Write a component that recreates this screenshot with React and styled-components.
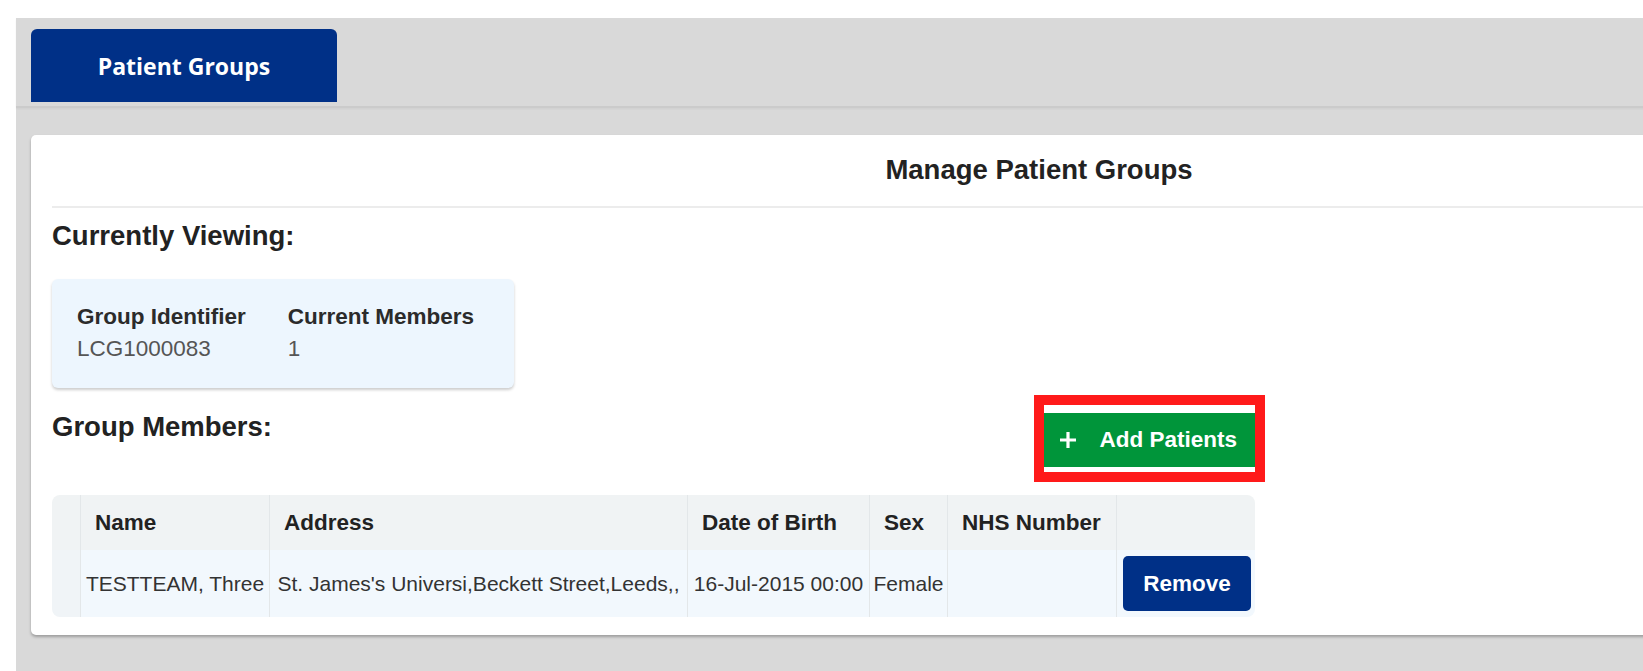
import React from "react";
import styled, { createGlobalStyle } from "styled-components";

const GlobalStyle = createGlobalStyle`
  html, body {
    margin: 0;
    padding: 0;
    background: #ffffff;
    overflow: hidden;
  }
  body {
    font-family: "Liberation Sans", Arial, sans-serif;
    color: #222;
  }
`;

const Page = styled.div`
  padding: 18px 0 0 16px;
  width: 2100px;
`;

const Shell = styled.div`
  background: #d9d9d9;
  min-height: calc(100vh - 18px);
`;

const TabBar = styled.nav`
  display: flex;
  padding: 11px 15px 4px;
  border-bottom: 2px solid #cbcbcb;
  box-shadow: 0 1px 2px rgba(0, 0, 0, 0.05);
`;

const Tab = styled.button`
  width: 306px;
  height: 73px;
  background: #003087;
  color: #ffffff;
  border: 0;
  border-radius: 6px 6px 0 0;
  font-family: "Open Sans", "Liberation Sans", sans-serif;
  font-weight: 700;
  font-size: 23px;
  cursor: pointer;
`;

const Content = styled.main`
  padding: 27px 15px 36px;
`;

const Card = styled.section`
  width: 2016px;
  box-sizing: border-box;
  background: #ffffff;
  border-radius: 5px;
  box-shadow: 0 2px 3px rgba(0, 0, 0, 0.28);
  padding: 18px 21px 18px;
`;

const Title = styled.h1`
  margin: 0;
  padding-bottom: 20px;
  border-bottom: 2px solid #ececec;
  text-align: center;
  font-size: 27.5px;
  line-height: 33px;
  font-weight: 700;
  color: #222;
`;

const SectionHeading = styled.h2`
  margin: ${(p) => p.$top || 0}px 0 0;
  font-size: 27.5px;
  line-height: 33px;
  font-weight: 700;
  color: #222;
`;

const InfoBox = styled.div`
  display: flex;
  width: fit-content;
  gap: 42px;
  margin-top: 27px;
  padding: 22px 40px 23px 25px;
  background: #edf6fe;
  border-radius: 6px;
  box-shadow: 0 2px 3px rgba(0, 0, 0, 0.2);
`;

const Field = styled.div`
  display: flex;
  flex-direction: column;
`;

const FieldLabel = styled.span`
  font-size: 22.5px;
  line-height: 32px;
  font-weight: 700;
  color: #2b2b2b;
`;

const FieldValue = styled.span`
  font-size: 22.5px;
  line-height: 32px;
  color: #555;
`;

const MembersBar = styled.div`
  display: flex;
  justify-content: space-between;
  align-items: flex-start;
  width: 1203px;
  margin-top: 17px;
`;

const Highlight = styled.span`
  display: block;
  padding: 8px 0 5px;
  background: #ffffff;
  outline: 10px solid #ff1a1a;
`;

const AddButton = styled.button`
  display: flex;
  align-items: center;
  gap: 21px;
  height: 54px;
  padding: 0 18px 0 14px;
  background: #00953a;
  color: #ffffff;
  border: 0;
  font-family: "Liberation Sans", Arial, sans-serif;
  font-weight: 700;
  font-size: 22.5px;
  cursor: pointer;
`;

const Table = styled.table`
  width: 1203px;
  margin-top: 23px;
  table-layout: fixed;
  border-collapse: separate;
  border-spacing: 0;
  border-radius: 8px;
  overflow: hidden;
`;

const HeadCell = styled.th`
  height: 55px;
  padding: 0 14px;
  text-align: left;
  font-size: 22.5px;
  font-weight: 700;
  color: #222;
  background: #f0f3f4;
  white-space: nowrap;
  border-left: ${(p) => (p.$first ? "0" : "1px solid #e3e7e9")};
`;

const Cell = styled.td`
  height: 67px;
  padding: 0 ${(p) => (p.$action ? "5px 0 6px" : "2px")};
  text-align: ${(p) => (p.$action ? "left" : "center")};
  font-size: 21px;
  color: #333;
  background: ${(p) => (p.$first ? "#f0f4f7" : "#f2f8fd")};
  white-space: nowrap;
  vertical-align: middle;
  border-left: ${(p) => (p.$first ? "0" : "1px solid #e3e7e9")};
`;

const RemoveButton = styled.button`
  width: 128px;
  height: 55px;
  background: #003087;
  color: #ffffff;
  border: 0;
  border-radius: 5px;
  font-family: "Liberation Sans", Arial, sans-serif;
  font-weight: 700;
  font-size: 22.5px;
  cursor: pointer;
`;

const PlusIcon = () => (
  <svg width="20" height="20" viewBox="0 0 20 20" aria-hidden="true">
    <path d="M10 2v16M2 10h16" stroke="#ffffff" strokeWidth="3.2" fill="none" />
  </svg>
);

const columns = [
  { key: "pad", label: "", width: 28 },
  { key: "name", label: "Name", width: 189 },
  { key: "address", label: "Address", width: 418 },
  { key: "dob", label: "Date of Birth", width: 182 },
  { key: "sex", label: "Sex", width: 78 },
  { key: "nhs", label: "NHS Number", width: 169 },
  { key: "action", label: "", width: 139 },
];

const members = [
  {
    id: 1,
    name: "TESTTEAM, Three",
    address: "St. James's Universi,Beckett Street,Leeds,,",
    dob: "16-Jul-2015 00:00",
    sex: "Female",
    nhs: "",
  },
];

export default function App() {
  return (
    <Page>
      <GlobalStyle />
      <Shell>
        <TabBar>
          <Tab>Patient Groups</Tab>
        </TabBar>
        <Content>
          <Card>
            <Title>Manage Patient Groups</Title>

            <SectionHeading $top={11}>Currently Viewing:</SectionHeading>
            <InfoBox>
              <Field>
                <FieldLabel>Group Identifier</FieldLabel>
                <FieldValue>LCG1000083</FieldValue>
              </Field>
              <Field>
                <FieldLabel>Current Members</FieldLabel>
                <FieldValue>{members.length}</FieldValue>
              </Field>
            </InfoBox>

            <MembersBar>
              <SectionHeading $top={5}>Group Members:</SectionHeading>
              <Highlight>
                <AddButton>
                  <PlusIcon />
                  Add Patients
                </AddButton>
              </Highlight>
            </MembersBar>

            <Table>
              <colgroup>
                {columns.map((c) => (
                  <col key={c.key} style={{ width: c.width }} />
                ))}
              </colgroup>
              <thead>
                <tr>
                  {columns.map((c, i) => (
                    <HeadCell key={c.key} $first={i === 0}>
                      {c.label}
                    </HeadCell>
                  ))}
                </tr>
              </thead>
              <tbody>
                {members.map((m) => (
                  <tr key={m.id}>
                    <Cell $first />
                    <Cell>{m.name}</Cell>
                    <Cell>{m.address}</Cell>
                    <Cell>{m.dob}</Cell>
                    <Cell>{m.sex}</Cell>
                    <Cell>{m.nhs}</Cell>
                    <Cell $action>
                      <RemoveButton>Remove</RemoveButton>
                    </Cell>
                  </tr>
                ))}
              </tbody>
            </Table>
          </Card>
        </Content>
      </Shell>
    </Page>
  );
}
